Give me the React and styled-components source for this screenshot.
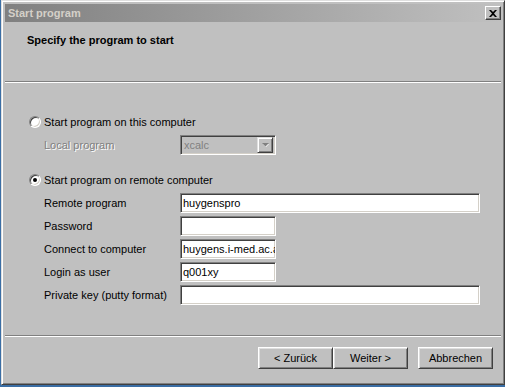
import React from "react";
import styled, { createGlobalStyle } from "styled-components";

const GlobalStyle = createGlobalStyle`
  html, body {
    margin: 0;
    padding: 0;
    background: #3a6ea5;
  }
  body {
    font-family: "Liberation Sans", Arial, sans-serif;
    font-size: 11px;
    color: #000;
  }
`;

const Desktop = styled.div`
  width: 505px;
  height: 387px;
  padding: 0 0 2px 1px;
  box-sizing: border-box;
  overflow: hidden;
`;

const Window = styled.div`
  width: 504px;
  height: 385px;
  box-sizing: border-box;
  background: #c0c0c0;
  border: 1px solid;
  border-color: #dfdfdf #404040 #404040 #dfdfdf;
  box-shadow: inset 1px 1px 0 #fff, inset -1px -1px 0 #808080;
  padding: 3px;
  display: flex;
  flex-direction: column;
`;

const TitleBar = styled.div`
  height: 18px;
  flex: none;
  display: flex;
  align-items: center;
  justify-content: space-between;
  padding: 0 0 0 3px;
  background: linear-gradient(to right, #808080, #c0c0c0);
  color: #d4d0c8;
  font-weight: bold;
  font-size: 11px;
`;

const CloseButton = styled.div`
  width: 16px;
  height: 14px;
  box-sizing: border-box;
  background: #c0c0c0;
  border: 1px solid;
  border-color: #fff #404040 #404040 #fff;
  box-shadow: inset -1px -1px 0 #808080;
  display: flex;
  align-items: center;
  justify-content: center;
`;

const Header = styled.div`
  height: 59px;
  flex: none;
  padding: 11px 0 0 22px;
  box-sizing: border-box;
  font-weight: bold;
  line-height: 14px;
`;

const Separator = styled.div`
  height: 0;
  flex: none;
  border-top: 1px solid #808080;
  border-bottom: 1px solid #fff;
`;

const Body = styled.div`
  flex: 1;
  padding: 32px 0 0 24px;
  box-sizing: border-box;
  display: flex;
  flex-direction: column;
`;

const RadioRow = styled.label`
  display: flex;
  align-items: center;
  gap: 3px;
  height: 14px;
  line-height: 14px;
  margin-top: ${(p) => p.$top || 0}px;
`;

const RadioCircle = styled.span`
  width: 12px;
  height: 12px;
  box-sizing: border-box;
  border-radius: 50%;
  background: #fff;
  border: 1px solid;
  border-color: #808080 #fff #fff #808080;
  box-shadow: inset 1px 1px 0 #404040, inset -1px -1px 0 #d4d0c8;
  display: flex;
  align-items: center;
  justify-content: center;
  &::after {
    content: "";
    width: 4px;
    height: 4px;
    border-radius: 50%;
    background: ${(p) => (p.$checked ? "#000" : "transparent")};
  }
`;

const Fields = styled.div`
  display: grid;
  grid-template-columns: 136px auto;
  row-gap: ${(p) => p.$gap}px;
  padding-left: 15px;
  margin-top: ${(p) => p.$top}px;
  align-items: center;
`;

const FieldLabel = styled.span`
  line-height: 14px;
  color: ${(p) => (p.$disabled ? "#808080" : "#000")};
  text-shadow: ${(p) => (p.$disabled ? "1px 1px 0 #fff" : "none")};
`;

const TextBox = styled.div`
  width: ${(p) => p.$w}px;
  height: 20px;
  box-sizing: border-box;
  background: #fff;
  border: 1px solid;
  border-color: #808080 #fff #fff #808080;
  box-shadow: inset 1px 1px 0 #404040, inset -1px -1px 0 #d4d0c8;
  padding: 0 2px;
  line-height: 18px;
  white-space: nowrap;
  overflow: hidden;
`;

const Combo = styled(TextBox)`
  background: #c0c0c0;
  color: #808080;
  display: flex;
  justify-content: space-between;
  align-items: center;
  padding: 0 2px 0 3px;
`;

const ComboArrow = styled.span`
  width: 16px;
  height: 16px;
  box-sizing: border-box;
  background: #c0c0c0;
  border: 1px solid;
  border-color: #dfdfdf #404040 #404040 #dfdfdf;
  box-shadow: inset 1px 1px 0 #fff, inset -1px -1px 0 #808080;
  display: flex;
  align-items: center;
  justify-content: center;
`;

const Footer = styled.div`
  flex: none;
  height: 44px;
  display: flex;
  justify-content: flex-end;
  padding: 10px 8px 0 0;
  box-sizing: border-box;
`;

const Button = styled.button`
  width: 75px;
  height: 22px;
  box-sizing: border-box;
  background: #c0c0c0;
  font-family: inherit;
  font-size: 11px;
  color: #000;
  border: 1px solid;
  border-color: #fff #404040 #404040 #fff;
  box-shadow: inset 1px 1px 0 #dfdfdf, inset -1px -1px 0 #808080;
  padding: 0;
  margin-left: ${(p) => p.$gap || 0}px;
`;

export default function App() {
  return (
    <Desktop>
      <GlobalStyle />
      <Window>
        <TitleBar>
          <span>Start program</span>
          <CloseButton>
            <svg width="8" height="7" viewBox="0 0 8 7">
              <path d="M0 0h2l2 2 2-2h2L5 3.5 8 7H6L4 5 2 7H0l3-3.5z" fill="#000" />
            </svg>
          </CloseButton>
        </TitleBar>
        <Header>Specify the program to start</Header>
        <Separator />
        <Body>
          <RadioRow>
            <RadioCircle />
            Start program on this computer
          </RadioRow>
          <Fields $top={6} $gap={0}>
            <FieldLabel $disabled>Local program</FieldLabel>
            <Combo $w={96}>
              <span>xcalc</span>
              <ComboArrow>
                <svg width="7" height="5" viewBox="0 0 7 5">
                  <path d="M1 1h6L4 4z" fill="#fff" />
                  <path d="M0 0h7L3.5 3.5z" fill="#808080" />
                </svg>
              </ComboArrow>
            </Combo>
          </Fields>
          <RadioRow $top={18}>
            <RadioCircle $checked />
            Start program on remote computer
          </RadioRow>
          <Fields $top={6} $gap={3}>
            <FieldLabel>Remote program</FieldLabel>
            <TextBox $w={300}>huygenspro</TextBox>
            <FieldLabel>Password</FieldLabel>
            <TextBox $w={96} />
            <FieldLabel>Connect to computer</FieldLabel>
            <TextBox $w={96}>huygens.i-med.ac.at</TextBox>
            <FieldLabel>Login as user</FieldLabel>
            <TextBox $w={96}>q001xy</TextBox>
            <FieldLabel>Private key (putty format)</FieldLabel>
            <TextBox $w={300} />
          </Fields>
        </Body>
        <Separator />
        <Footer>
          <Button>&lt; Zurück</Button>
          <Button>Weiter &gt;</Button>
          <Button $gap={10}>Abbrechen</Button>
        </Footer>
      </Window>
    </Desktop>
  );
}
